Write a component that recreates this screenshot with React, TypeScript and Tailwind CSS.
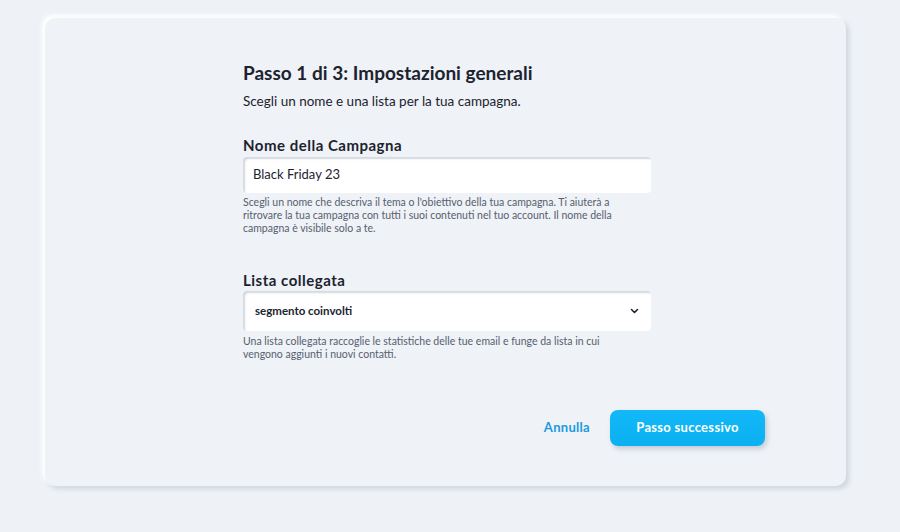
export default function App() {
  return (
    <div className="min-h-[532px] w-[900px] bg-[#eef2f6] pt-[18px] pl-[45px]" style={{ fontFamily: "Lato, 'Noto Sans', sans-serif" }}>
      <div className="w-[801px] h-[468px] rounded-[10px] bg-[#eff2f6] shadow-[-3px_-3px_4px_#ffffff,3px_3px_5px_#cfd5de] flex flex-col">
        <div className="w-[408px] ml-[198px] mt-[43px] flex flex-col">
          <h1 className="text-[19px] font-bold text-[#1c2330] leading-[24px]">Passo 1 di 3: Impostazioni generali</h1>
          <p className="mt-[7px] text-[13.5px] text-[#1c2330] leading-[18px]">Scegli un nome e una lista per la tua campagna.</p>

          <label className="mt-[25px] text-[15px] font-bold tracking-[0.5px] text-[#1c2330] leading-[20px]">Nome della Campagna</label>
          <div className="mt-[2px] h-[36px] rounded-[4px] bg-white shadow-[inset_2px_2px_2px_#d3d8df] flex items-center px-[10px] text-[13px] text-[#1c2330]">
            Black Friday 23
          </div>
          <p className="mt-[3px] text-[10.5px] leading-[13px] text-[#566070]">
            Scegli un nome che descriva il tema o l'obiettivo della tua campagna. Ti aiuterà a ritrovare la tua campagna con tutti i suoi contenuti nel tuo account. Il nome della campagna è visibile solo a te.
          </p>

          <label className="mt-[35px] text-[15px] font-bold tracking-[0.5px] text-[#1c2330] leading-[20px]">Lista collegata</label>
          <div className="mt-[1px] h-[40px] rounded-[4px] bg-white shadow-[inset_2px_2px_2px_#d3d8df] flex items-center justify-between pl-[12px] pr-[12px] text-[11.5px] font-bold text-[#1c2330]">
            <span>segmento coinvolti</span>
            <svg width="9" height="6" viewBox="0 0 9 6"><path d="M1.5 1.5 L4.5 4.5 L7.5 1.5" stroke="#1c2330" strokeWidth="1.6" fill="none" strokeLinecap="round" strokeLinejoin="round" /></svg>
          </div>
          <p className="mt-[4px] max-w-[380px] text-[10.5px] leading-[13px] text-[#566070]">
            Una lista collegata raccoglie le statistiche delle tue email e funge da lista in cui vengono aggiunti i nuovi contatti.
          </p>
        </div>
        <div className="mt-[49px] flex items-center justify-end pr-[81px] gap-[20px]">
          <button className="text-[13px] font-bold text-[#1a9be0] tracking-[0.3px]">Annulla</button>
          <button className="w-[155px] h-[36px] rounded-[8px] bg-gradient-to-b from-[#12b8f7] to-[#0ab0f0] text-white text-[13px] font-bold tracking-[0.3px] shadow-[2px_3px_5px_#c4cbd6]">Passo successivo</button>
        </div>
      </div>
    </div>
  );
}
